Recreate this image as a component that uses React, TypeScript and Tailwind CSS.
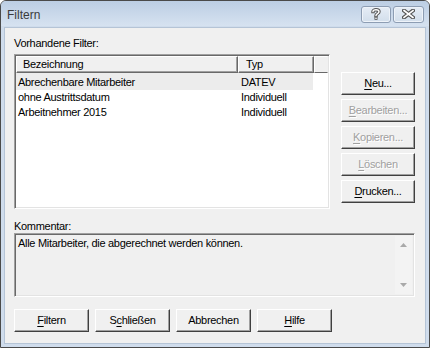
import React from "react";

function U({ children }: { children: React.ReactNode }) {
  return <span className="underline underline-offset-[2px] decoration-1">{children}</span>;
}

function Btn({
  children,
  disabled,
  w = "w-[74px]",
}: {
  children: React.ReactNode;
  disabled?: boolean;
  w?: string;
}) {
  return (
    <div
      className={`${w} h-[23px] bg-[#f0f0f0] border border-t-white border-l-white border-r-[#404040] border-b-[#404040] shadow-[inset_-1px_-1px_0_#a0a0a0] flex items-center justify-center text-[11px] ${
        disabled ? "text-[#a0a0a0] [text-shadow:1px_1px_0_#ffffff]" : "text-black"
      }`}
    >
      <span className="leading-none">{children}</span>
    </div>
  );
}

export default function App() {
  const rows = [
    { name: "Abrechenbare Mitarbeiter", typ: "DATEV", sel: true },
    { name: "ohne Austrittsdatum", typ: "Individuell" },
    { name: "Arbeitnehmer 2015", typ: "Individuell" },
  ];
  return (
    <div className="w-[430px] h-[348px] font-['Liberation_Sans',Arial,sans-serif] tracking-[-0.3px] text-black">
      <div className="w-full h-full border border-[#4a4a4a] rounded-t-[6px] bg-[#cfdcec] flex flex-col overflow-hidden">
        {/* Title bar */}
        <div className="h-[25px] shrink-0 bg-gradient-to-b from-[#bccee4] to-[#d6e2f0] flex items-center justify-between pl-[6px] pr-[5px]">
          <span className="text-[12px] text-[#3b3b3b] tracking-normal mt-[2px]">Filtern</span>
          <div className="flex gap-[2px] mt-[1px]">
            <div className="w-[30px] h-[17px] rounded-[3px] border border-[#8d9db3] bg-gradient-to-b from-[#e6edf6] to-[#d2deeb] flex items-center justify-center shadow-[inset_0_0_0_1px_#eef3f9]">
              <svg width="10" height="12" viewBox="0 0 10 12">
                <path d="M2 3.5 C2 1.2 8 1.2 8 3.8 C8 5.6 5 5.6 5 7.6" fill="none" stroke="#555" strokeWidth="3.4" strokeLinecap="square" />
                <path d="M2 3.5 C2 1.2 8 1.2 8 3.8 C8 5.6 5 5.6 5 7.6" fill="none" stroke="#fff" strokeWidth="1.4" strokeLinecap="square" />
                <rect x="3.5" y="8.8" width="3" height="3" fill="#555" />
                <rect x="4.3" y="9.6" width="1.4" height="1.4" fill="#fff" />
              </svg>
            </div>
            <div className="w-[31px] h-[17px] rounded-[3px] border border-[#8d9db3] bg-gradient-to-b from-[#e6edf6] to-[#d2deeb] flex items-center justify-center shadow-[inset_0_0_0_1px_#eef3f9]">
              <svg width="13" height="10" viewBox="0 0 13 10">
                <path d="M2 1.5 L11 8.5 M11 1.5 L2 8.5" stroke="#555" strokeWidth="4" strokeLinecap="square" />
                <path d="M2 1.5 L11 8.5 M11 1.5 L2 8.5" stroke="#fff" strokeWidth="1.6" strokeLinecap="square" />
              </svg>
            </div>
          </div>
        </div>
        {/* Client */}
        <div className="flex-1 mx-[3px] mb-[3px] mt-[1px] border border-[#b5c4d6] bg-[#f0f0f0] pl-[9px] pr-[9px] pt-[8px] flex flex-col text-[11px]">
          <div className="h-[14px] leading-[14px]">Vorhandene Filter:</div>
          <div className="flex mt-[4px]">
            {/* List */}
            <div className="w-[316px] h-[155px] border border-t-[#a0a0a0] border-l-[#a0a0a0] border-r-white border-b-white shadow-[inset_1px_1px_0_#696969,inset_-1px_-1px_0_#e3e3e3] bg-white p-[1px] flex flex-col">
              <div className="flex h-[17px] shrink-0 bg-[#f0f0f0]">
                <div className="w-[222px] h-full border border-t-white border-l-white border-r-[#696969] border-b-[#696969] shadow-[inset_-1px_-1px_0_#a0a0a0] pl-[6px] leading-[15px]">
                  Bezeichnung
                </div>
                <div className="w-[76px] h-full border border-t-white border-l-white border-r-[#696969] border-b-[#696969] shadow-[inset_-1px_-1px_0_#a0a0a0] pl-[7px] leading-[15px]">
                  Typ
                </div>
                <div className="flex-1 h-full border border-t-white border-l-white border-r-[#f0f0f0] border-b-[#696969]" />
              </div>
              <div className="flex flex-col">
                {rows.map((r, i) => (
                  <div key={i} className={`flex w-[297px] ${i === 0 ? "h-[17px] pt-[2px]" : "h-[15px]"} ${r.sel ? "bg-[#ececec]" : ""}`}>
                    <div className="w-[222px] pl-[2px] leading-[15px]">{r.name}</div>
                    <div className="pl-[3px] leading-[15px]">{r.typ}</div>
                  </div>
                ))}
              </div>
            </div>
            {/* Buttons */}
            <div className="flex flex-col gap-[4px] ml-[11px] mt-[18px]">
              <Btn><U>N</U>eu...</Btn>
              <Btn disabled><U>B</U>earbeiten...</Btn>
              <Btn disabled><U>K</U>opieren...</Btn>
              <Btn disabled><U>L</U>öschen</Btn>
              <Btn><U>D</U>rucken...</Btn>
            </div>
          </div>
          <div className="h-[14px] leading-[14px] mt-[10px]">Kommentar:</div>
          <div className="w-[401px] h-[64px] border border-t-[#a0a0a0] border-l-[#a0a0a0] border-r-white border-b-white shadow-[inset_1px_1px_0_#696969,inset_-1px_-1px_0_#e3e3e3] flex">
            <div className="flex-1 pl-[3px] pt-[2px] leading-[14px]">
              Alle Mitarbeiter, die abgerechnet werden können.
            </div>
            <div className="w-[17px] mr-[2px] mt-[2px] mb-[2px] bg-[#f3f3f3] flex flex-col justify-between items-center py-[7px]">
              <svg width="7" height="4" viewBox="0 0 7 4"><path d="M0 4 L3.5 0 L7 4 Z" fill="#a9a9a9" /></svg>
              <svg width="7" height="4" viewBox="0 0 7 4"><path d="M0 0 L3.5 4 L7 0 Z" fill="#a9a9a9" /></svg>
            </div>
          </div>
          <div className="flex gap-[6px] mt-[12px]">
            <Btn w="w-[75px]"><U>F</U>iltern</Btn>
            <Btn w="w-[75px]">S<U>c</U>hließen</Btn>
            <Btn w="w-[75px]">Abbrechen</Btn>
            <Btn w="w-[75px]"><U>H</U>ilfe</Btn>
          </div>
        </div>
      </div>
    </div>
  );
}
